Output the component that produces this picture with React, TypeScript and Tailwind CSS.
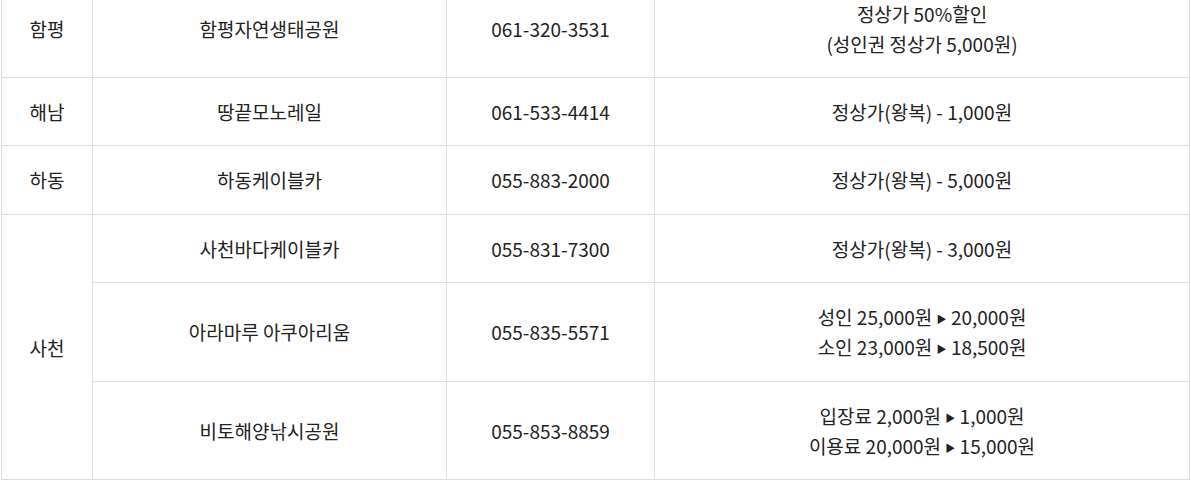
const rows: { region?: string; span?: number; name: string; tel: string; price: string[]; tall?: boolean }[] = [
  { region: '함평', name: '함평자연생태공원', tel: '061-320-3531', price: ['정상가 50%할인', '(성인권 정상가 5,000원)'] },
  { region: '해남', name: '땅끝모노레일', tel: '061-533-4414', price: ['정상가(왕복) - 1,000원'] },
  { region: '하동', name: '하동케이블카', tel: '055-883-2000', price: ['정상가(왕복) - 5,000원'], tall: true },
  { region: '사천', span: 3, name: '사천바다케이블카', tel: '055-831-7300', price: ['정상가(왕복) - 3,000원'] },
  { name: '아라마루 아쿠아리움', tel: '055-835-5571', price: ['성인 25,000원 ▸ 20,000원', '소인 23,000원 ▸ 18,500원'], tall: true },
  { name: '비토해양낚시공원', tel: '055-853-8859', price: ['입장료 2,000원 ▸ 1,000원', '이용료 20,000원 ▸ 15,000원'] },
];

function Price({ text }: { text: string }) {
  const [a, b] = text.split(' ▸ ');
  if (b === undefined) return <div>{text}</div>;
  return (
    <div>
      {a} <span className="inline-block align-[2px] text-[10px] leading-none">▶</span> {b}
    </div>
  );
}

export default function App() {
  return (
    <div className="h-[481px] overflow-hidden bg-white pl-[1px]">
      <table
        className="-mt-[21px] w-[1189px] table-fixed border-collapse text-[19px] leading-[30px] text-[#222222]"
        style={{ fontFamily: '"Noto Sans CJK KR", "Noto Sans", sans-serif' }}
      >
        <colgroup>
          <col className="w-[91px]" />
          <col className="w-[354px]" />
          <col className="w-[208px]" />
          <col />
        </colgroup>
        <tbody>
          {rows.map((r) => {
            const cell = `border border-[#dddddd] pt-[19px] px-2 text-center align-middle ${r.tall ? 'pb-[19px]' : 'pb-[18px]'}`;
            return (
              <tr key={r.tel}>
                {r.region && (
                  <td rowSpan={r.span ?? 1} className={cell}>
                    {r.region}
                  </td>
                )}
                <td className={cell}>{r.name}</td>
                <td className={cell}>{r.tel}</td>
                <td className={cell}>
                  {r.price.map((p) => (
                    <Price key={p} text={p} />
                  ))}
                </td>
              </tr>
            );
          })}
        </tbody>
      </table>
    </div>
  );
}
